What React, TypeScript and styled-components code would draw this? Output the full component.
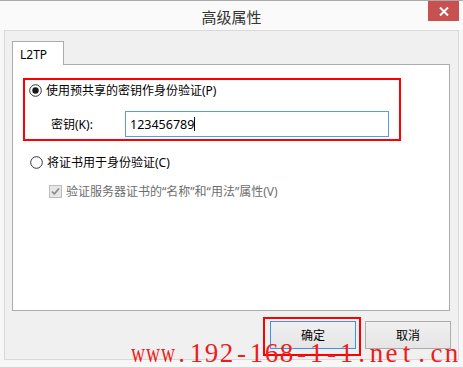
import React from "react";
import styled, { createGlobalStyle } from "styled-components";

const Global = createGlobalStyle`
  html, body { margin: 0; padding: 0; background: #f7f7f7; }
  body { font-family: "Noto Sans", "Noto Sans CJK SC", sans-serif; }
`;

const UI_FONT = `"Noto Sans", "Noto Sans CJK SC", sans-serif`;

const Window = styled.div`
  position: relative;
  width: 463px;
  height: 368px;
  box-sizing: border-box;
  background: #f7f7f7;
  border-top: 1px solid #a9a9a9;
  border-bottom: 1px solid #d6d6d6;
  display: flex;
  flex-direction: column;
  overflow: hidden;
`;

const TitleBar = styled.div`
  position: relative;
  height: 29px;
  display: flex;
  align-items: center;
  justify-content: center;
  background: #fafafa;
`;

const Title = styled.div`
  font-family: ${UI_FONT};
  font-size: 15px;
  color: #333;
  margin-top: 1px;
`;

const CloseButton = styled.div`
  position: absolute;
  top: 0;
  right: 4px;
  width: 31px;
  height: 20px;
  background: #c75050;
  display: flex;
  align-items: center;
  justify-content: center;
`;

const Frame = styled.div`
  margin: 0 4px;
  height: 330px;
  box-sizing: border-box;
  border: 1px solid #d9d9d9;
  background: #f0f0f0;
  padding: 10px 7px 0 7px;
  display: flex;
  flex-direction: column;
`;

const TabStrip = styled.div`
  display: flex;
  position: relative;
  z-index: 1;
  margin-bottom: -1px;
`;

const Tab = styled.div`
  width: 52px;
  height: 24px;
  box-sizing: border-box;
  border: 1px solid #acacac;
  border-bottom: none;
  background: #fff;
  font-family: ${UI_FONT};
  font-size: 12px;
  color: #000;
  padding: 4px 0 0 7px;
`;

const Panel = styled.div`
  width: 438px;
  height: 247px;
  box-sizing: border-box;
  border: 1px solid #acacac;
  background: #fff;
  padding: 13px 0 0 0;
  display: flex;
  flex-direction: column;
`;

const Highlight = styled.div`
  margin-left: 10px;
  width: 378px;
  height: 63px;
  box-sizing: border-box;
  border: 2px solid #ff0000;
  display: flex;
  flex-direction: column;
  gap: 11px;
`;

const OptionRow = styled.div<{ $indent: number }>`
  display: flex;
  align-items: center;
  gap: 4px;
  height: 20px;
  padding-left: ${(p) => p.$indent}px;
  font-family: ${UI_FONT};
  font-size: 12px;
  color: #000;
`;

const DisabledLabel = styled.span`
  color: #6d6d6d;
`;

const KeyRow = styled.div`
  display: flex;
  align-items: center;
  height: 26px;
  padding-left: 26px;
  font-family: ${UI_FONT};
  font-size: 12px;
  color: #000;
`;

const KeyLabel = styled.span`
  width: 74px;
`;

const TextBox = styled.div`
  width: 264px;
  height: 26px;
  box-sizing: border-box;
  border: 1px solid #569de5;
  display: flex;
  align-items: center;
  padding-left: 4px;
  font-family: ${UI_FONT};
  font-size: 12.5px;
  color: #000;
`;

const Caret = styled.span`
  display: inline-block;
  width: 1px;
  height: 14px;
  background: #000;
`;

const CertRow = styled(OptionRow)`
  margin-top: 11px;
`;

const CheckRow = styled(OptionRow)`
  margin-top: 9px;
`;

const ButtonRow = styled.div`
  display: flex;
  justify-content: flex-end;
  gap: 9px;
  margin-top: 10px;
`;

const Button = styled.div<{ $default?: boolean }>`
  position: relative;
  width: 86px;
  height: 28px;
  box-sizing: border-box;
  border: 1px solid ${(p) => (p.$default ? "#3c93e6" : "#acacac")};
  background: linear-gradient(#f0f0f0, #e5e5e5);
  display: flex;
  align-items: center;
  justify-content: center;
  font-family: ${UI_FONT};
  font-size: 12px;
  color: #000;
`;

const Annotation = styled.div`
  position: absolute;
  left: -8px;
  top: -5px;
  right: -6px;
  bottom: -8px;
  border: 2px solid #ff0000;
  pointer-events: none;
`;

const Watermark = styled.div`
  position: absolute;
  left: 129px;
  top: 337px;
  display: flex;
  font-family: "Liberation Serif", "DejaVu Serif", serif;
  font-size: 27px;
  color: #ee1c1c;
  white-space: nowrap;
  line-height: 30px;
`;

const Cell = styled.span<{ $squeeze: number }>`
  display: inline-block;
  width: 15px;
  text-align: center;
  transform: scaleX(${(p) => p.$squeeze});
`;

const Radio = ({ checked }: { checked?: boolean }) => (
  <svg width="13" height="13" viewBox="0 0 13 13">
    <circle cx="6.5" cy="6.5" r="5.8" fill="#fff" stroke="#333" strokeWidth="1" />
    {checked && <circle cx="6.5" cy="6.5" r="3.2" fill="#1a1a1a" />}
  </svg>
);

const CheckBox = () => (
  <svg width="13" height="13" viewBox="0 0 13 13">
    <rect x="0.5" y="0.5" width="12" height="12" fill="#e6e6e6" stroke="#bcbcbc" />
    <path d="M3 6.5 L5.3 9 L10 3.5" fill="none" stroke="#8c8c8c" strokeWidth="1.8" />
  </svg>
);

const WATERMARK = "www.192-168-1-1.net.cn";

export default function App() {
  return (
    <>
      <Global />
      <Window>
        <TitleBar>
          <Title>高级属性</Title>
          <CloseButton>
            <svg width="10" height="9" viewBox="0 0 10 9">
              <path d="M1 0.5 L9 8.5 M9 0.5 L1 8.5" stroke="#fff" strokeWidth="2" />
            </svg>
          </CloseButton>
        </TitleBar>
        <Frame>
          <TabStrip>
            <Tab>L2TP</Tab>
          </TabStrip>
          <Panel>
            <Highlight>
              <OptionRow $indent={4}>
                <Radio checked />
                <span>使用预共享的密钥作身份验证(P)</span>
              </OptionRow>
              <KeyRow>
                <KeyLabel>密钥(K):</KeyLabel>
                <TextBox>
                  123456789
                  <Caret />
                </TextBox>
              </KeyRow>
            </Highlight>
            <CertRow $indent={17}>
              <Radio />
              <span>将证书用于身份验证(C)</span>
            </CertRow>
            <CheckRow $indent={36}>
              <CheckBox />
              <DisabledLabel>验证服务器证书的“名称”和“用法”属性(V)</DisabledLabel>
            </CheckRow>
          </Panel>
          <ButtonRow>
            <Button $default>
              确定
              <Annotation />
            </Button>
            <Button>取消</Button>
          </ButtonRow>
        </Frame>
        <Watermark>
          {WATERMARK.split("").map((c, i) => (
            <Cell key={i} $squeeze={c === "w" ? 0.72 : 1}>
              {c}
            </Cell>
          ))}
        </Watermark>
      </Window>
    </>
  );
}
